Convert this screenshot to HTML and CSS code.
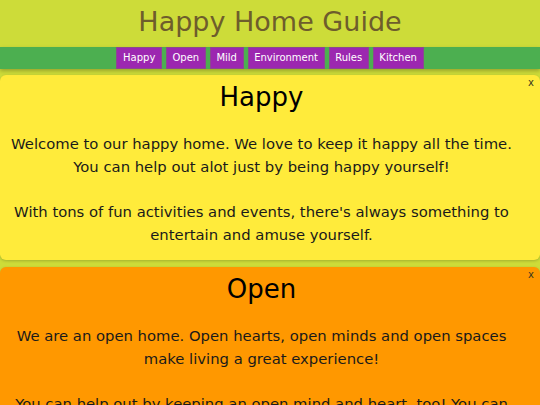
FILE: index.html
```html
<!DOCTYPE html>
<html lang="en">
<head>
<meta charset="utf-8">
<title>Happy Home Guide</title>
<link rel="stylesheet" href="styles.css">
</head>
<body>
<header class="site-header">
  <h1 class="site-title">Happy Home Guide</h1>
</header>
<nav class="nav">
  <a class="nav-btn" href="#happy">Happy</a>
  <a class="nav-btn" href="#open">Open</a>
  <a class="nav-btn" href="#mild">Mild</a>
  <a class="nav-btn" href="#environment">Environment</a>
  <a class="nav-btn" href="#rules">Rules</a>
  <a class="nav-btn" href="#kitchen">Kitchen</a>
</nav>
<main class="cards">
  <section class="card card-yellow" id="happy">
    <button class="close">x</button>
    <h2 class="card-title">Happy</h2>
    <p class="card-text">Welcome to our happy home. We love to keep it happy all the time. You can help out alot just by being happy yourself!</p>
    <p class="card-text">With tons of fun activities and events, there's always something to entertain and amuse yourself.</p>
  </section>
  <section class="card card-orange" id="open">
    <button class="close">x</button>
    <h2 class="card-title">Open</h2>
    <p class="card-text">We are an open home. Open hearts, open minds and open spaces make living a great experience!</p>
    <p class="card-text">You can help out by keeping an open mind and heart, too! You can always share your ideas and thoughts with everyone.</p>
  </section>
</main>
</body>
</html>
```

FILE: styles.css
```css
html, body {
  margin: 0;
  padding: 0;
}
body {
  background: #cddc39;
  font-family: "DejaVu Sans", Verdana, sans-serif;
}
.site-header {
  padding: 6px 0 10px;
  text-align: center;
}
.site-title {
  margin: 0;
  font-size: 27px;
  line-height: 31px;
  font-weight: normal;
  color: #6e5d2c;
}
.nav {
  background: #4caf50;
  height: 22px;
  display: flex;
  justify-content: center;
  gap: 4px;
  box-shadow: 0 2px 4px rgba(0, 0, 0, 0.25);
  position: relative;
  z-index: 1;
}
.nav-btn {
  display: block;
  background: #9c27b0;
  color: #fff;
  font-size: 10px;
  line-height: 20px;
  padding: 0 5.6px;
  border: 1px solid #8a4a8e;
  text-decoration: none;
}
.cards {
  display: flex;
  flex-direction: column;
  gap: 7px;
  padding-top: 6px;
}
.card {
  position: relative;
  border-radius: 6px;
  padding: 7px 27px 14px 10px;
  text-align: center;
  box-shadow: 0 1px 3px rgba(0, 0, 0, 0.2);
}
.card-yellow {
  background: #ffeb3b;
}
.card-orange {
  background: #ff9800;
}
.card-title {
  margin: 0 0 20px;
  font-size: 26px;
  line-height: 30px;
  font-weight: normal;
  color: #000;
}
.card-text {
  margin: 0 0 22px;
  font-size: 14.8px;
  line-height: 23px;
  color: #1a1a1a;
}
.card-text:last-child {
  margin-bottom: 0;
}
.close {
  position: absolute;
  top: 2px;
  right: 6px;
  background: none;
  border: none;
  padding: 0;
  font-family: "DejaVu Sans", sans-serif;
  font-size: 10px;
  line-height: 12px;
  color: #3a3a20;
}
```
